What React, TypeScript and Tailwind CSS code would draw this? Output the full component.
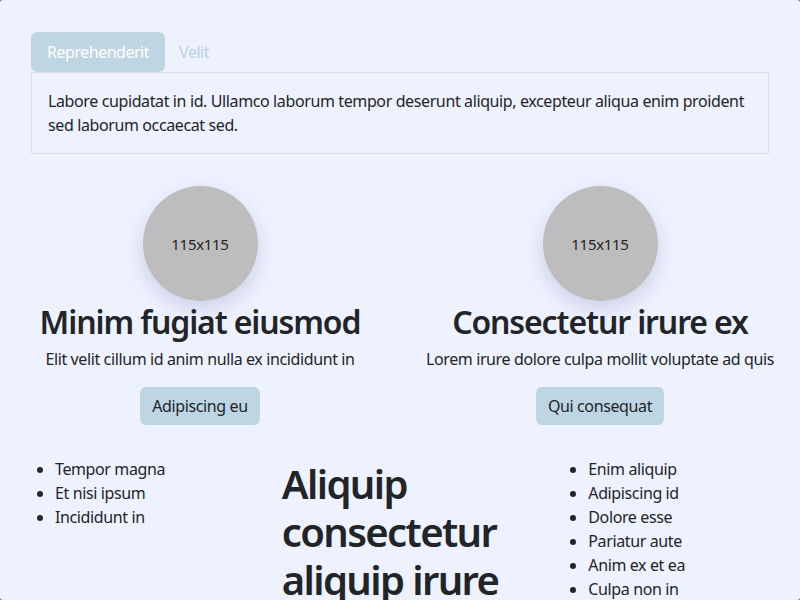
const font = { fontFamily: '"Noto Sans", "Open Sans", sans-serif' };

const Card = ({ title, text, action }: { title: string; text: string; action: string }) => {
  return (
    <div className="flex flex-col items-center text-center">
      <div className="w-[115px] h-[115px] rounded-full bg-[#bdbdbd] flex items-center justify-center pt-[2px] text-[15px] tracking-[-0.02em] text-[#212529] shadow-[0_8px_20px_rgba(100,110,150,0.25)]">
        115x115
      </div>
      <h2 className="text-[32px] leading-[1.2] font-semibold tracking-[-0.035em] text-[#212529] mt-[2px] mb-[6px]">{title}</h2>
      <p className="text-base leading-6 tracking-[-0.024em] text-[#212529] mb-4">{text}</p>
      <button className="h-[38px] px-3 rounded-md bg-[#bed6e3] text-[#212529] text-base tracking-[-0.024em]">{action}</button>
    </div>
  );
};

const List = ({ items }: { items: string[] }) => {
  return (
    <ul className="list-disc pl-10 text-base leading-6 tracking-[-0.024em] text-[#212529]">
      {items.map((item) => (
        <li key={item}>{item}</li>
      ))}
    </ul>
  );
};

export default function App() {
  return (
    <div className="w-[800px] h-[600px] bg-[#3b82f6] overflow-hidden" style={font}>
      <div className="w-full h-full bg-[#eef2ff] rounded-[3px] overflow-hidden">
        <div className="px-[31px] pt-8">
          <div className="flex text-base tracking-[-0.03em]">
            <div className="h-10 px-4 flex items-center rounded-md bg-[#bed6e3] text-white">Reprehenderit</div>
            <div className="h-10 px-[14px] flex items-center text-[#b8d3e4]">Velit</div>
          </div>
          <div className="border border-[#dee2e6] p-4 text-base leading-6 tracking-[-0.024em] text-[#212529]">
            Labore cupidatat in id. Ullamco laborum tempor deserunt aliquip, excepteur aliqua enim proident sed laborum
            occaecat sed.
          </div>
        </div>

        <div className="grid grid-cols-2 mt-8">
          <Card title="Minim fugiat eiusmod" text="Elit velit cillum id anim nulla ex incididunt in" action="Adipiscing eu" />
          <Card title="Consectetur irure ex" text="Lorem irure dolore culpa mollit voluptate ad quis" action="Qui consequat" />
        </div>

        <div className="grid grid-cols-3 mt-8">
          <div className="px-[15px]">
            <List items={["Tempor magna", "Et nisi ipsum", "Incididunt in"]} />
          </div>
          <div className="px-[15px]">
            <h1 className="text-[40px] leading-[1.2] font-semibold tracking-[-0.04em] text-[#212529] mt-[3px]">
              Aliquip consectetur aliquip irure
            </h1>
          </div>
          <div className="px-[15px]">
            <List items={["Enim aliquip", "Adipiscing id", "Dolore esse", "Pariatur aute", "Anim ex et ea", "Culpa non in"]} />
          </div>
        </div>
      </div>
    </div>
  );
}
